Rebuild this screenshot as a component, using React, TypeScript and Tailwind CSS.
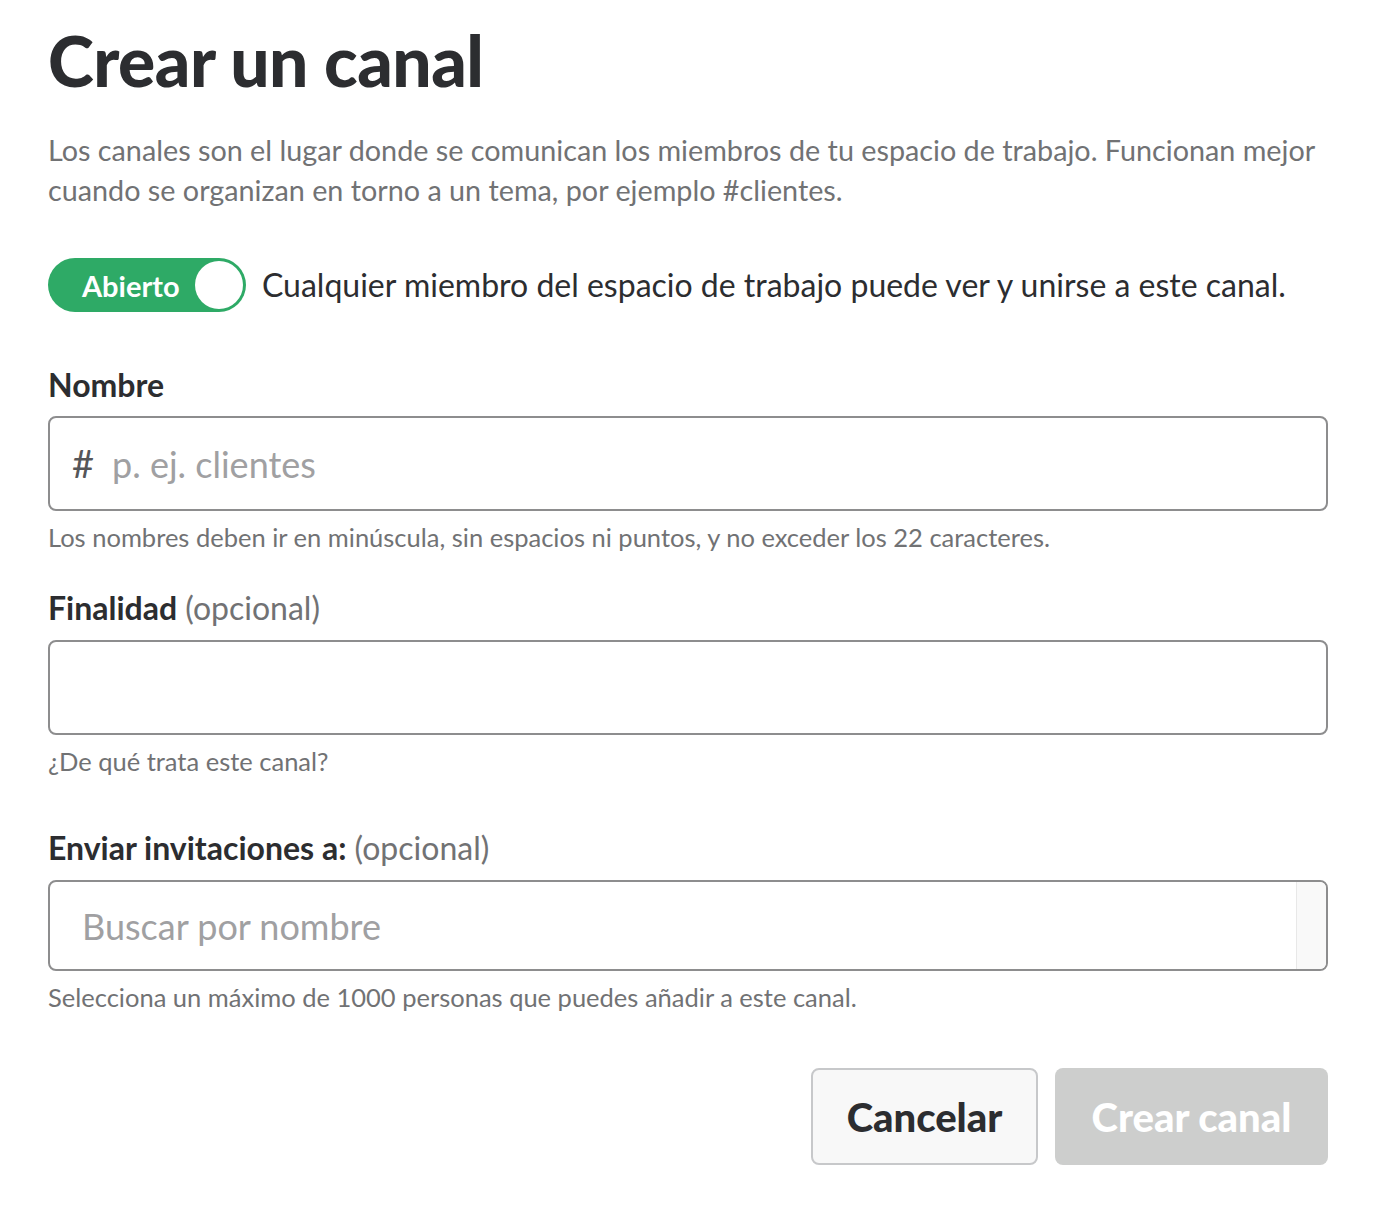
import React, { useState } from 'react';

const font = { fontFamily: 'Lato, "Noto Sans", sans-serif' };

const App: React.FC = () => {
  const [open, setOpen] = useState(true);
  const [name, setName] = useState('');
  const [purpose, setPurpose] = useState('');
  const [invite, setInvite] = useState('');

  return (
    <div className="min-h-[1220px] bg-white text-[#2c2d30]" style={font}>
      <div className="w-[1280px] ml-[48px] pt-[18px]">
        <h1 className="text-[69.5px] leading-[84px] font-black tracking-[-0.5px]">Crear un canal</h1>

        <p className="mt-[28px] text-[28.75px] leading-[40px] text-[#717274]">
          Los canales son el lugar donde se comunican los miembros de tu espacio de trabajo. Funcionan mejor cuando se organizan en torno a un tema, por ejemplo #clientes.
        </p>

        {/* Toggle */}
        <div className="mt-[48px] flex items-center">
          <button
            onClick={() => setOpen(!open)}
            className="flex items-center justify-between w-[198px] h-[54px] rounded-full bg-[#2eaa66] pl-[34px] pr-[3px]"
          >
            <span className="text-white font-bold text-[29px] leading-none" style={font}>Abierto</span>
            <span className="w-[48px] h-[48px] rounded-full bg-white" />
          </button>
          <span className="ml-[16px] text-[32px] leading-none">Cualquier miembro del espacio de trabajo puede ver y unirse a este canal.</span>
        </div>

        {/* Nombre */}
        <label className="block mt-[53px] text-[32px] leading-[40px] font-bold">Nombre</label>
        <div className="mt-[11px] flex items-center h-[95px] border-2 border-[#8d8d8e] rounded-[8px] px-[22px]">
          <span className="text-[38px] text-[#555659] mr-[18px]">#</span>
          <input
            value={name}
            onChange={e => setName(e.target.value)}
            placeholder="p. ej. clientes"
            className="flex-1 outline-none bg-transparent text-[36px] text-[#2c2d30] placeholder:text-[#a0a0a2]"
            style={font}
          />
        </div>
        <p className="mt-[11px] text-[25.5px] leading-[30px] text-[#717274]">Los nombres deben ir en minúscula, sin espacios ni puntos, y no exceder los 22 caracteres.</p>

        {/* Finalidad */}
        <label className="block mt-[36px] text-[32px] leading-[40px]">
          <span className="font-bold">Finalidad</span> <span className="text-[#717274]">(opcional)</span>
        </label>
        <div className="mt-[12px] h-[95px] border-2 border-[#8d8d8e] rounded-[8px] px-[22px] flex items-center">
          <input
            value={purpose}
            onChange={e => setPurpose(e.target.value)}
            className="w-full outline-none bg-transparent text-[36px]"
            style={font}
          />
        </div>
        <p className="mt-[11px] text-[25.5px] leading-[30px] text-[#717274]">¿De qué trata este canal?</p>

        {/* Invitaciones */}
        <label className="block mt-[52px] text-[32px] leading-[40px]">
          <span className="font-bold">Enviar invitaciones a:</span> <span className="text-[#717274]">(opcional)</span>
        </label>
        <div className="mt-[12px] h-[91px] border-2 border-[#8d8d8e] rounded-[8px] flex overflow-hidden">
          <input
            value={invite}
            onChange={e => setInvite(e.target.value)}
            placeholder="Buscar por nombre"
            className="flex-1 outline-none bg-transparent pl-[32px] text-[36px] placeholder:text-[#a0a0a2]"
            style={font}
          />
          <div className="w-[30px] bg-[#f9f9f9] border-l border-[#e8e8e8]" />
        </div>
        <p className="mt-[11px] text-[25.5px] leading-[30px] text-[#717274]">Selecciona un máximo de 1000 personas que puedes añadir a este canal.</p>

        {/* Buttons */}
        <div className="mt-[56px] flex justify-end gap-[17px]">
          <button className="w-[227px] h-[97px] rounded-[8px] border-2 border-[#c7c8ca] bg-[#f8f8f8] text-[40px] font-black text-[#2c2d30]" style={font}>
            Cancelar
          </button>
          <button disabled className="w-[273px] h-[97px] rounded-[8px] bg-[#cdcecd] text-[40px] font-black text-white" style={font}>
            Crear canal
          </button>
        </div>
      </div>
    </div>
  );
};

export default App;
